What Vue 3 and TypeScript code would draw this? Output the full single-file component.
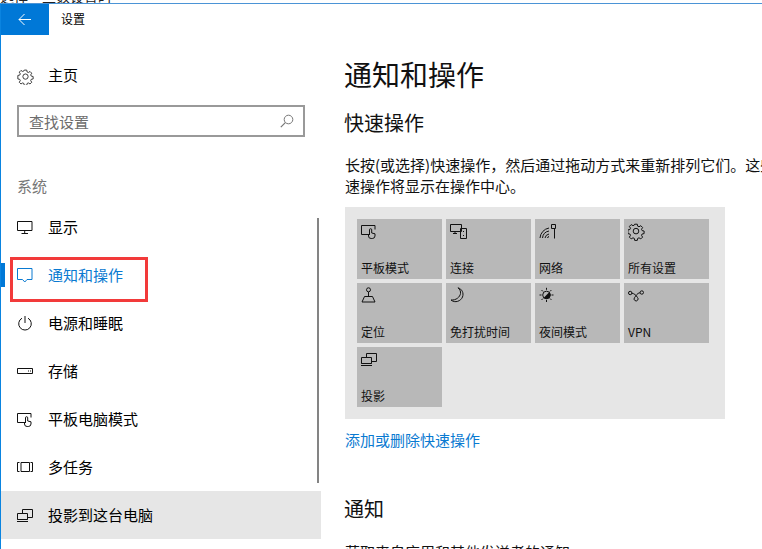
<script setup lang="ts">
interface NavItem { label: string; icon: string; cls?: string }
const nav: NavItem[] = [
  { label: '显示', icon: 'display' },
  { label: '通知和操作', icon: 'note', cls: 'active' },
  { label: '电源和睡眠', icon: 'power' },
  { label: '存储', icon: 'storage' },
  { label: '平板电脑模式', icon: 'tablet' },
  { label: '多任务', icon: 'multi' },
  { label: '投影到这台电脑', icon: 'project', cls: 'hover' },
]
const tiles = [
  { label: '平板模式', icon: 'tablet' },
  { label: '连接', icon: 'connect' },
  { label: '网络', icon: 'network' },
  { label: '所有设置', icon: 'gear' },
  { label: '定位', icon: 'location' },
  { label: '免打扰时间', icon: 'moon' },
  { label: '夜间模式', icon: 'sun' },
  { label: 'VPN', icon: 'vpn' },
  { label: '投影', icon: 'project' },
]
const gearPath = 'M6.7 1.2h2.6l.4 2 1.3.6 1.8-1.1 1.8 1.8-1.1 1.8.6 1.3 2 .4v2.6l-2 .4-.6 1.3 1.1 1.8-1.8 1.8-1.8-1.1-1.3.6-.4 2H6.7l-.4-2-1.3-.6-1.8 1.1-1.8-1.8 1.1-1.8-.6-1.3-2-.4V6.9l2-.4.6-1.3-1.100-1.800 1.800-1.800 1.800 1.100 1.300-.6z'
</script>

<template>
  <div class="page">
    <div class="behind"><span>选择一些数设置时</span></div>
    <div class="win">
      <aside class="side">
        <header class="titlebar">
          <div class="back">
            <svg width="14" height="14" viewBox="0 0 14 14" class="ico"><path d="M6.5 1 1 6.500 6.500 12M1 6.500H13" stroke="#fff" stroke-width="1" /></svg>
          </div>
          <span class="title">设置</span>
        </header>
        <div class="home">
          <svg width="17" height="17" viewBox="-1 -1 18 18" class="ico"><path :d="gearPath" stroke="#333" /><circle cx="8" cy="8.100" r="2.800" stroke="#333" /></svg>
          <span class="lift">主页</span>
        </div>
        <div class="search">
          <span>查找设置</span>
          <svg width="14" height="14" viewBox="0 0 14 14" class="ico"><circle cx="8.500" cy="5.500" r="4.300" stroke="#777" /><path d="M5.300 8.700.8 13.200" stroke="#777" stroke-width="1.200" /></svg>
        </div>
        <div class="group">系统</div>
        <div class="list-wrap">
          <ul class="list">
            <li v-for="n in nav" :key="n.label" class="item" :class="n.cls">
              <span class="marker" />
              <svg width="16" height="16" viewBox="0 0 16 16" class="ico nav-ico">
                <g v-if="n.icon === 'display'"><path d="M.5 2.500h14.500v9H.5zM7.700 11.500v2.500M4.500 14.500h6.500" /></g>
                <g v-else-if="n.icon === 'note'"><path d="M.5 1.500h14.500v11H10l-2.200 2.500-2.300-2.500H.5z" /></g>
                <g v-else-if="n.icon === 'power'"><path d="M8 1v7M5 3.200a6.300 6.300 0 1 0 6 0" /></g>
                <g v-else-if="n.icon === 'storage'"><path d="M.5 5.500h15v5H.5zM11 8h1M13 8h1" /></g>
                <g v-else-if="n.icon === 'tablet'"><path d="M7 11.500H.5v-9h13.500v4M8.500 12V6.800a1.100 1.100 0 0 1 2.200 0V10l3.300.8v2.200a2.700 2.700 0 0 1-2.700 2.500H10.200a2.600 2.600 0 0 1-2.700-2.500V11" /></g>
                <g v-else-if="n.icon === 'multi'"><path d="M4 3.500h8.500v9H4zM2.500 3.500H.5v9h2M13.500 3.500h2v9h-2" /></g>
                <g v-else-if="n.icon === 'project'"><path d="M5.500 2.500h10v8h-5M.5 6.500h10v6H.5zM.5 12.500h10M0 14.500h11M5.500 6V2.500" /></g>
              </svg>
              <span class="lift">{{ n.label }}</span>
            </li>
          </ul>
          <div class="scrollbar" />
        </div>
      </aside>
      <main class="main">
        <h1>通知和操作</h1>
        <h2>快速操作</h2>
        <p class="desc">长按(或选择)快速操作，然后通过拖动方式来重新排列它们。这些快速操作将显示在操作中心。</p>
        <section class="panel">
          <div v-for="t in tiles" :key="t.label" class="tile">
            <svg width="18" height="18" viewBox="0 0 18 18" class="ico tile-ico">
              <g v-if="t.icon === 'tablet'"><path d="M7 11.500H.5v-9h13.500v4M8.500 12V6.800a1.100 1.100 0 0 1 2.200 0V10l3.300.8v2.200a2.700 2.700 0 0 1-2.700 2.500H10.200a2.600 2.600 0 0 1-2.700-2.500V11" /></g>
              <g v-else-if="t.icon === 'connect'"><path d="M.5 1.500h11v7H.5zM3 10.500h4M5 8.500v2M10.500 5.500h6v10h-6zM13.500 8v1M13.500 12v1" /></g>
              <g v-else-if="t.icon === 'network'"><path d="M1 15a11 11 0 0 1 9-10M3.500 15a8 8 0 0 1 6.500-7M6 15a5 5 0 0 1 4-4M8.500 15a2 2 0 0 1 1.500-1.500M12.500 1.500h4v4h-4zM15.500 5.500V15.500" /></g>
              <g v-else-if="t.icon === 'gear'"><path :d="gearPath" /><circle cx="8" cy="8.100" r="2.800" /></g>
              <g v-else-if="t.icon === 'location'"><circle cx="7.500" cy="2.800" r="2" /><path d="M7.500 5v5M3.500 9.500h8l2.500 5.500H1z" /></g>
              <g v-else-if="t.icon === 'moon'"><path d="M8 .8C12 2 14 6 12.500 10 11 14 5 16.500 1 13c5 .5 9-3 9.500-6.500C10.800 4.500 10 2.500 8 .8z" /></g>
              <g v-else-if="t.icon === 'sun'"><circle cx="7.500" cy="8" r="3.800" /><path d="M10.200 5.300a3.800 3.800 0 0 1-5.400 5.400z" fill="#111" stroke="none" /><path d="M7.500 .8v2M7.500 13v2M.5 8h2M12.500 8h2M2.500 3l1.400 1.400M11 11.500l1.400 1.400M2.500 13l1.400-1.400M11 4.400 12.400 3" /></g>
              <g v-else-if="t.icon === 'vpn'"><circle cx="2.200" cy="6" r="1.700" /><circle cx="13.800" cy="5.500" r="1.700" /><path d="M3.900 6.200C6 6.500 8 8 9.500 10.500a2 2 0 1 1-3 .2C8 9 9 6 12.100 5.700" /></g>
              <g v-else-if="t.icon === 'project'"><path d="M5.500 2.500h10v8h-5M.5 6.500h10v6H.5zM.5 12.500h10M0 14.500h11M5.500 6V2.500" /></g>
            </svg>
            <span class="tile-label">{{ t.label }}</span>
          </div>
        </section>
        <a class="link">添加或删除快速操作</a>
        <h2 class="h-notice">通知</h2>
        <p class="desc cut">获取来自应用和其他发送者的通知</p>
      </main>
    </div>
    <div class="redbox" />
  </div>
</template>

<style>
html, body { margin: 0; padding: 0; background: #fff; overflow: hidden; }
</style>

<style scoped>
.page {
  position: relative;
  width: 762px;
  height: 549px;
  overflow: hidden;
  background: #fff;
  font-family: "Noto Sans CJK SC", "Liberation Sans", sans-serif;
  color: #000;
  display: flex;
  flex-direction: column;
}
.behind {
  height: 3px;
  flex: none;
  overflow: hidden;
  font-size: 14px;
  line-height: 14px;
  color: #222;
  white-space: nowrap;
}
.behind span { display: block; margin-top: -11px; }
.win {
  flex: 1;
  display: flex;
  min-height: 0;
  border-top: 1px solid #4b94d6;
  border-left: 1px solid #0a84e0;
}
.side {
  width: 320px;
  flex: none;
  display: flex;
  flex-direction: column;
}
.titlebar {
  display: flex;
  align-items: center;
  height: 31px;
  flex: none;
}
.back {
  width: 48px;
  height: 31px;
  background: #0078d7;
  display: flex;
  align-items: center;
  justify-content: center;
}
.title { margin-left: 12px; font-size: 12px; padding-bottom: 3px; }
.ico { fill: none; flex: none; display: block; }
.lift { padding-bottom: 2px; }
.home {
  display: flex;
  align-items: center;
  height: 48px;
  margin-top: 17px;
  padding-left: 16px;
  font-size: 15px;
  gap: 14px;
}
.home .lift { padding-bottom: 4px; }
.search {
  box-sizing: border-box;
  width: 288px;
  height: 32px;
  margin: 5px 0 0 16px;
  border: 2px solid #999;
  padding: 0 9px 0 10px;
  display: flex;
  align-items: center;
  justify-content: space-between;
  font-size: 15px;
  color: #6d6d6d;
}
.group {
  margin: 39px 0 0 16px;
  font-size: 15px;
  line-height: 20px;
  color: #777;
}
.list-wrap {
  position: relative;
  margin-top: 7px;
}
.list { list-style: none; margin: 0; padding: 0; }
.item {
  position: relative;
  height: 48px;
  display: flex;
  align-items: center;
  padding-left: 16px;
  font-size: 15px;
  gap: 15px;
}
.nav-ico { stroke: #111; }
.item.active { color: #0a7ad1; }
.item.active .nav-ico { stroke: #0a7ad1; }
.item.hover { background: #e6e6e6; }
.marker { display: none; }
.item.active .marker {
  display: block;
  position: absolute;
  left: 0;
  top: 12px;
  width: 4px;
  height: 24px;
  background: #0078d7;
}
.scrollbar {
  position: absolute;
  right: 2px;
  top: 15px;
  width: 2px;
  height: 265px;
  background: #848484;
}
.main {
  flex: 1;
  min-width: 0;
  padding: 0 0 0 24px;
  overflow: hidden;
}
h1 {
  margin: 49px 0 0 -1px;
  font-size: 28px;
  font-weight: 400;
  line-height: 42px;
  color: #111;
}
h2 {
  margin: 12px 0 0 -1px;
  font-size: 20px;
  font-weight: 400;
  line-height: 32px;
  color: #111;
}
.desc {
  margin: 15px 0 0;
  width: 452px;
  font-size: 15px;
  line-height: 21px;
  color: #111;
  word-break: break-all;
}
.panel {
  box-sizing: border-box;
  width: 380px;
  margin-top: 11px;
  padding: 12px;
  background: #e6e6e6;
  display: grid;
  grid-template-columns: repeat(4, 85px);
  grid-auto-rows: 60px;
  gap: 4px;
}
.tile {
  background: #b8b8b8;
  display: flex;
  flex-direction: column;
  justify-content: space-between;
  padding: 4px 4px 3px 4px;
  box-sizing: border-box;
}
.tile-ico { stroke: #111; }
.tile-label { font-size: 12px; line-height: 17px; color: #111; }
.link {
  display: block;
  margin-top: 11px;
  font-size: 15px;
  line-height: 20px;
  color: #0a7ad1;
}
.h-notice { margin-top: 43px; }
.cut { margin-top: 16px; white-space: nowrap; }
.redbox {
  position: absolute;
  left: 10px;
  top: 257px;
  width: 138px;
  height: 45px;
  box-sizing: border-box;
  border: 3px solid #f23a3a;
}
</style>
